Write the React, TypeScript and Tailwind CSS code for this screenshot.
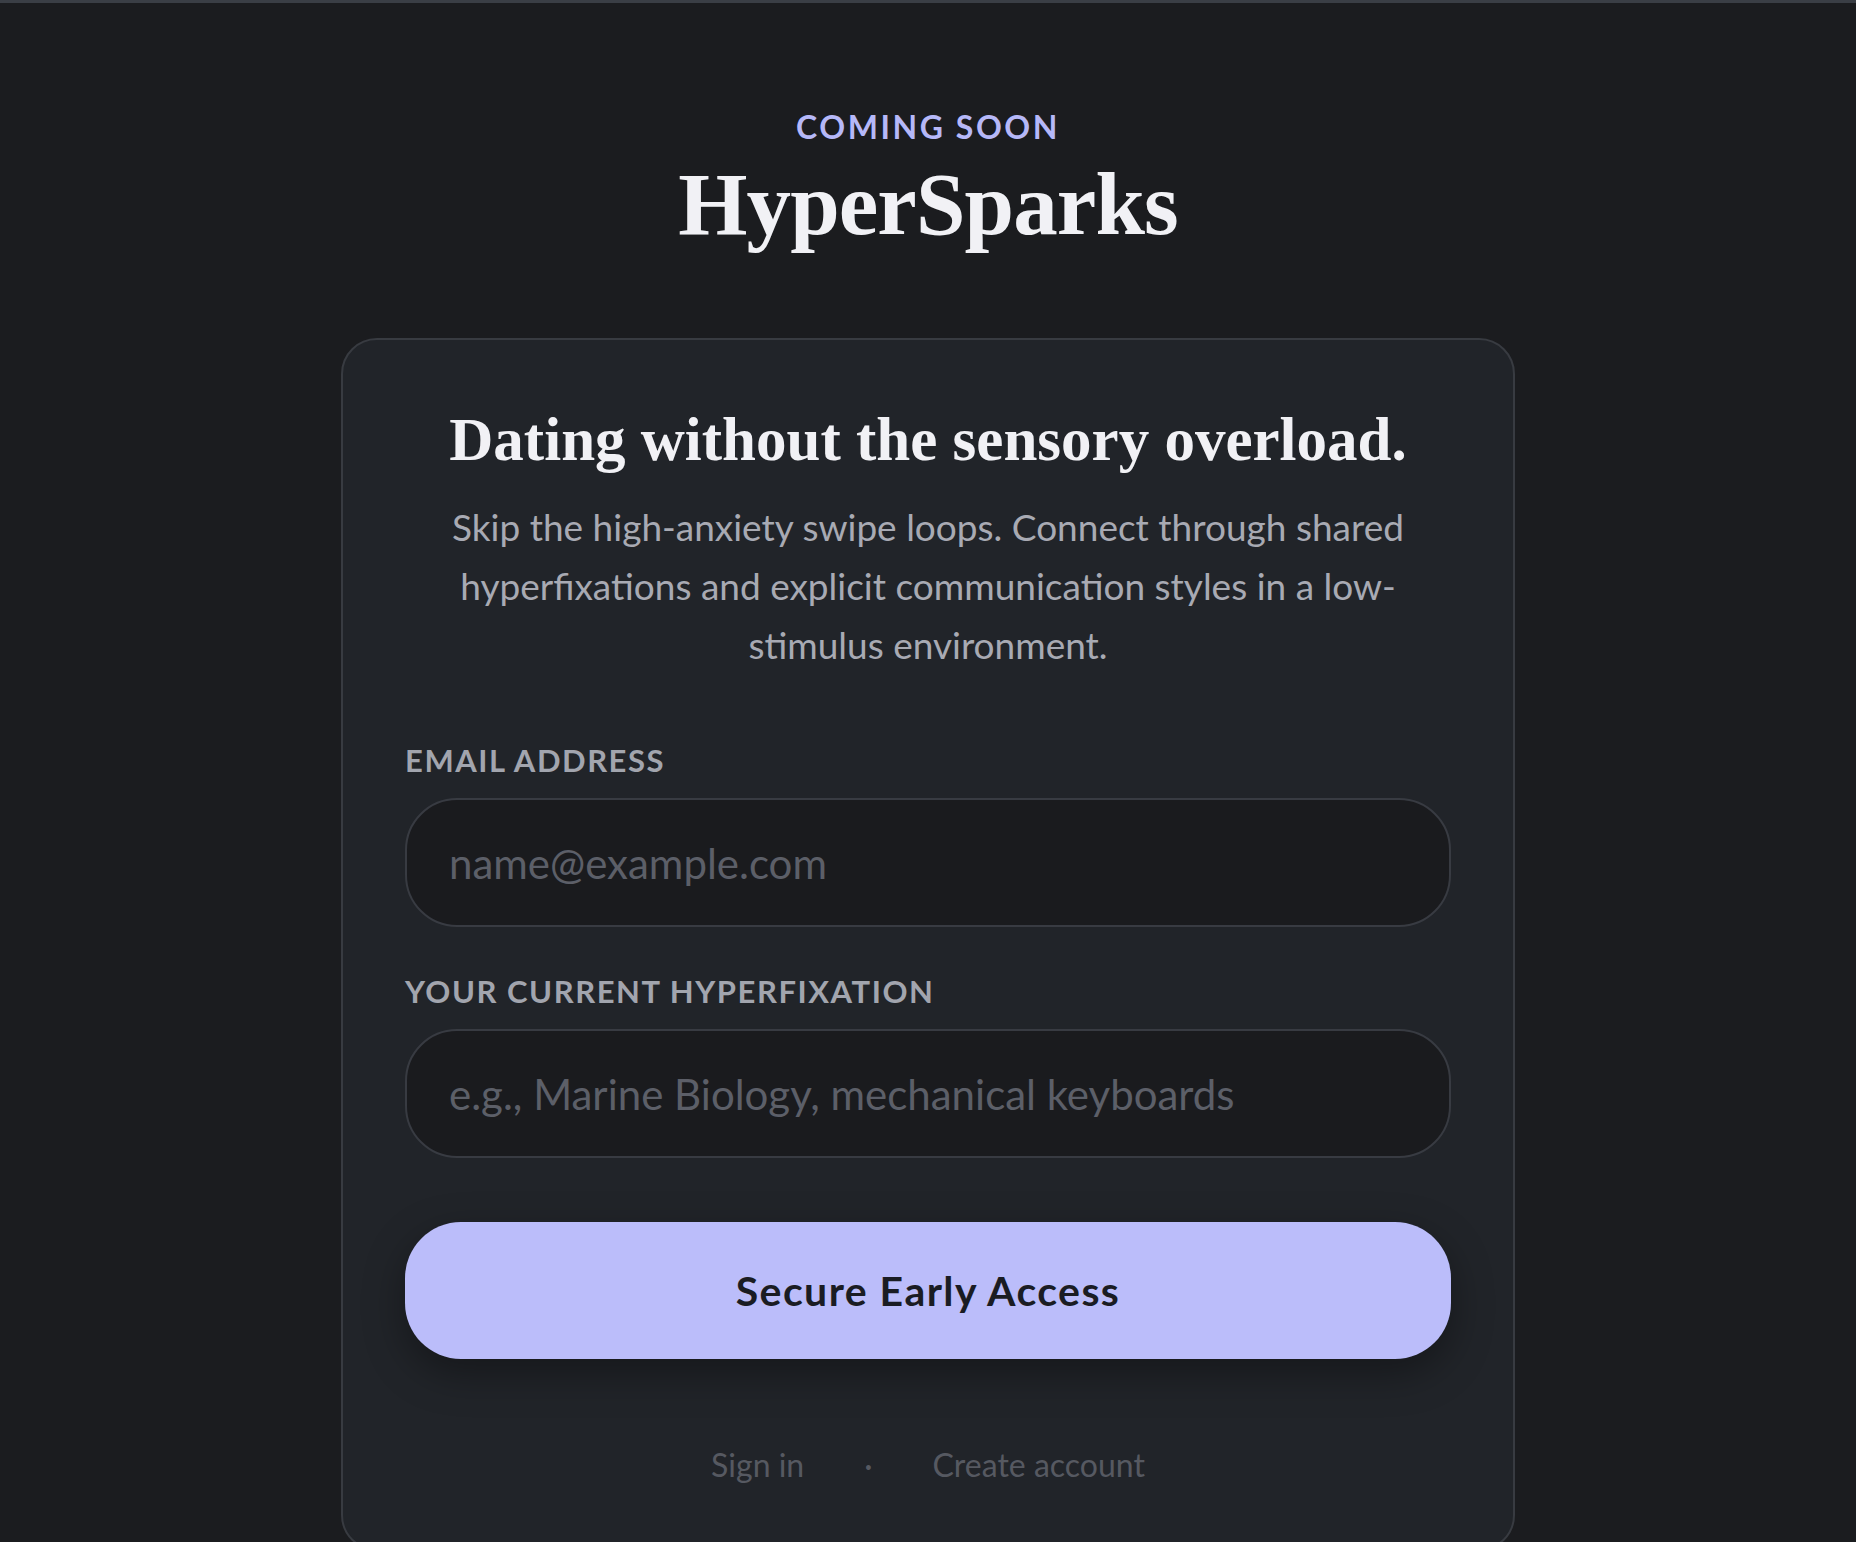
import React from "react";

export default function App() {
  const sans = { fontFamily: "Lato, 'Noto Sans', sans-serif" } as React.CSSProperties;
  return (
    <div className="min-h-screen w-full bg-[#1b1c1f] border-t-[3px] border-[#3a3e45] flex flex-col items-center overflow-hidden" style={sans}>
      <div className="mt-[104px] text-[32px] leading-[40px] font-bold tracking-[0.08em] text-[#b6b8f8] [font-family:Lato,sans-serif]">
        COMING SOON
      </div>
      <h1 className="mt-[7px] text-[89px] leading-[100px] font-bold text-[#f1f1f5] [font-family:'Liberation_Serif',serif] tracking-[-0.01em]">
        HyperSparks
      </h1>
      <div className="mt-[84px] w-[1174px] rounded-[36px] border-2 border-[#383b41] bg-[#212429] px-[62px] pt-[64px] pb-[66px] flex flex-col">
        <h2 className="text-center text-[61px] leading-[72px] font-bold text-[#f1f1f5] [font-family:'Liberation_Serif',serif]">
          Dating without the sensory overload.
        </h2>
        <p className="mt-[21px] text-center text-[37px] leading-[59px] text-[#a8aab3] [font-family:Lato,sans-serif]">
          Skip the high-anxiety swipe loops. Connect through shared
          <br />
          hyperfixations and explicit communication styles in a low-
          <br />
          stimulus environment.
        </p>
        <label className="mt-[68px] text-[31px] leading-[36px] font-bold tracking-[0.05em] text-[#a2a5ae] [font-family:Lato,sans-serif]">
          EMAIL ADDRESS
        </label>
        <input
          type="email"
          placeholder="name@example.com"
          className="mt-[20px] h-[129px] w-full rounded-[52px] border-2 border-[#383b42] bg-[#1a1b1e] px-[42px] text-[42px] text-[#e5e5ea] placeholder:text-[#5c5f68] outline-none [font-family:Lato,sans-serif]"
        />
        <label className="mt-[46px] text-[31px] leading-[36px] font-bold tracking-[0.05em] text-[#a2a5ae] [font-family:Lato,sans-serif]">
          YOUR CURRENT HYPERFIXATION
        </label>
        <input
          type="text"
          placeholder="e.g., Marine Biology, mechanical keyboards"
          className="mt-[20px] h-[129px] w-full rounded-[52px] border-2 border-[#383b42] bg-[#1a1b1e] px-[42px] text-[42px] text-[#e5e5ea] placeholder:text-[#5c5f68] outline-none [font-family:Lato,sans-serif]"
        />
        <button className="mt-[64px] h-[137px] w-full rounded-[56px] bg-[#bbbdfa] text-[41px] font-bold tracking-[0.035em] text-[#1a1c23] shadow-[0_14px_40px_rgba(0,0,0,0.35)] [font-family:Lato,sans-serif]">
          Secure Early Access
        </button>
        <div className="mt-[88px] flex items-center justify-center gap-[60px] text-[32px] leading-[36px] text-[#565961] [font-family:Lato,sans-serif]">
          <a>Sign in</a>
          <span>·</span>
          <a>Create account</a>
        </div>
      </div>
    </div>
  );
}
